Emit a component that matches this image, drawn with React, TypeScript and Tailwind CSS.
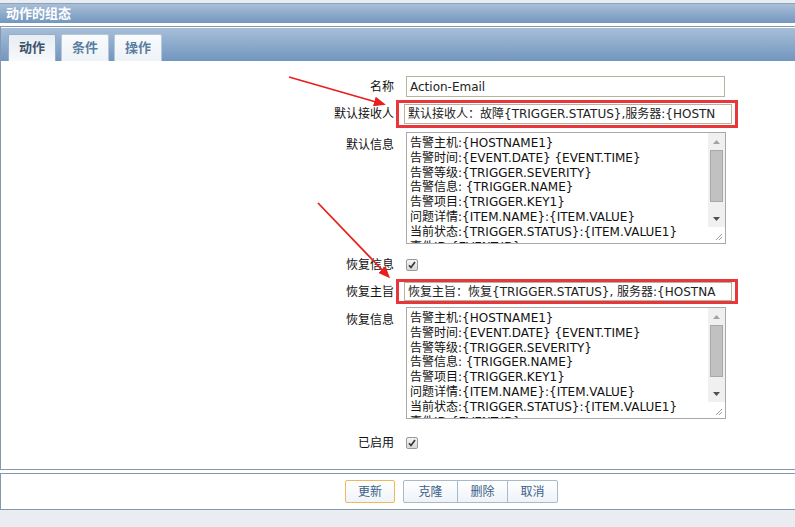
import React from "react";

const lines = [
  "告警主机:{HOSTNAME1}",
  "告警时间:{EVENT.DATE} {EVENT.TIME}",
  "告警等级:{TRIGGER.SEVERITY}",
  "告警信息: {TRIGGER.NAME}",
  "告警项目:{TRIGGER.KEY1}",
  "问题详情:{ITEM.NAME}:{ITEM.VALUE}",
  "当前状态:{TRIGGER.STATUS}:{ITEM.VALUE1}",
  "事件ID:{EVENT.ID}",
];

const font = { fontFamily: '"DejaVu Sans", "Noto Sans CJK SC", sans-serif' };

function FakeTextarea() {
  return (
    <div className="relative flex h-[112px] w-[320px] border border-[#a9a9a9] bg-white">
      <div className="flex-1 overflow-hidden pl-[3px] pt-[3px] text-[12px] leading-[14.8px] text-[#111]">
        {lines.map((l) => (
          <div key={l} className="whitespace-nowrap">{l}</div>
        ))}
      </div>
      <div className="flex w-[17px] flex-col bg-[#f0f0f0]">
        <div className="flex h-[17px] items-center justify-center">
          <svg width="7" height="4" viewBox="0 0 7 4"><path d="M0 4L3.5 0L7 4Z" fill="#a3a3a3" /></svg>
        </div>
        <div className="mx-[2px] h-[52px] border border-[#a8a8a8] bg-[#c1c1c1]" />
        <div className="flex-1" />
        <div className="flex h-[17px] items-center justify-center">
          <svg width="7" height="4" viewBox="0 0 7 4"><path d="M0 0L3.5 4L7 0Z" fill="#505050" /></svg>
        </div>
        <div className="relative h-[16px] bg-white">
          <svg className="absolute bottom-[2px] right-[2px]" width="9" height="9" viewBox="0 0 9 9">
            <path d="M8 2L2 8M8 5L5 8" stroke="#9a9a9a" strokeWidth="1" />
          </svg>
        </div>
      </div>
    </div>
  );
}

function Check() {
  return (
    <div className="flex h-[12px] w-[12px] items-center justify-center rounded-[2px] border border-[#9a9a9a] bg-gradient-to-b from-[#f4f4f4] to-[#d8d8d8]">
      <svg width="8" height="8" viewBox="0 0 8 8">
        <path d="M1 4.2L3 6.5L7 1" stroke="#333" strokeWidth="1.6" fill="none" />
      </svg>
    </div>
  );
}

function Label({ children }: { children: React.ReactNode }) {
  return <div className="w-[394px] shrink-0 pr-[1px] text-right text-[12px] text-[#111]">{children}</div>;
}

export default function App() {
  return (
    <div className="relative h-[527px] w-[795px] overflow-hidden bg-[#e9edf1]" style={font}>
      <div className="h-[3px]" />
      {/* header */}
      <div className="flex h-[20px] items-center border-t border-[#8aa2bd] bg-gradient-to-b from-[#a9bfd7] to-[#7397c0] pl-[6px] text-[13px] font-bold text-white">
        动作的组态
      </div>
      <div className="h-[3px] bg-white" />
      {/* main panel */}
      <div className="w-[800px] border border-r-0 border-[#8498ae] bg-white">
        <div className="flex h-[34px] items-end gap-[5px] border-t border-white bg-gradient-to-b from-[#a7bed8] to-[#7296bf] pl-[7px]">
          <div className="flex h-[27px] w-[48px] items-center justify-center rounded-t-[2px] border border-b-0 border-[#98aec5] bg-gradient-to-b from-[#e6edf4] to-[#f7f9fb] text-[13px] font-bold text-[#3f536b]">
            动作
          </div>
          <div className="flex h-[27px] w-[48px] items-center justify-center rounded-t-[2px] border border-b-0 border-[#b7c8da] bg-gradient-to-b from-[#f9fbfc] to-[#eef3f7] text-[13px] font-bold text-[#5b7da2]">
            条件
          </div>
          <div className="flex h-[27px] w-[48px] items-center justify-center rounded-t-[2px] border border-b-0 border-[#b7c8da] bg-gradient-to-b from-[#f9fbfc] to-[#eef3f7] text-[13px] font-bold text-[#5b7da2]">
            操作
          </div>
        </div>
        <div className="h-[408px] pt-[15px]">
          {/* name */}
          <div className="flex items-center">
            <Label>名称</Label>
            <div className="ml-[11px] flex h-[21px] w-[319px] items-center border border-[#b4b4a0] pl-[3px] text-[12px] text-[#222]">
              Action-Email
            </div>
          </div>
          {/* default subject */}
          <div className="mt-[3px] flex items-center">
            <Label>默认接收人</Label>
            <div className="ml-[1px] border-[3px] border-[#e8373a] py-[1px] pl-[5px] pr-[3px]">
              <div className="flex h-[20px] w-[328px] items-center overflow-hidden whitespace-nowrap border border-[#b4b4a0] pl-[3px] text-[12px] text-[#222]">
                默认接收人：故障{"{TRIGGER.STATUS}"},服务器:{"{HOSTN"}
              </div>
            </div>
          </div>
          {/* default message */}
          <div className="mt-[4px] flex items-start">
            <div className="pt-[4px]"><Label>默认信息</Label></div>
            <div className="ml-[11px]"><FakeTextarea /></div>
          </div>
          {/* recovery checkbox */}
          <div className="mt-[12px] flex items-center">
            <Label>恢复信息</Label>
            <div className="ml-[11px]"><Check /></div>
          </div>
          {/* recovery subject */}
          <div className="mt-[5px] flex items-center">
            <Label>恢复主旨</Label>
            <div className="ml-[1px] border-[3px] border-[#e8373a] pl-[5px] pr-[3px]">
              <div className="flex h-[19px] w-[328px] items-center overflow-hidden whitespace-nowrap border border-[#b4b4a0] pl-[3px] text-[12px] text-[#222]">
                恢复主旨：恢复{"{TRIGGER.STATUS}"}, 服务器:{"{HOSTNA"}
              </div>
            </div>
          </div>
          {/* recovery message */}
          <div className="mt-[3px] flex items-start">
            <div className="pt-[4px]"><Label>恢复信息</Label></div>
            <div className="ml-[11px]"><FakeTextarea /></div>
          </div>
          {/* enabled */}
          <div className="mt-[15px] flex items-center">
            <Label>已启用</Label>
            <div className="ml-[11px]"><Check /></div>
          </div>
        </div>
      </div>
      <div className="h-[3px] bg-white" />
      {/* footer */}
      <div className="flex h-[37px] w-[800px] items-center border border-r-0 border-[#8498ae] bg-white pl-[344px]">
        <div className="flex h-[23px] w-[50px] items-center justify-center rounded-[2px] border border-[#f0b85a] bg-gradient-to-b from-[#ffffff] to-[#f0f4f8] text-[12px] text-[#3d5f88]">
          更新
        </div>
        <div className="ml-[8px] flex h-[23px] rounded-[2px] border border-[#a7b9cd] bg-gradient-to-b from-[#ffffff] to-[#eef3f8] text-[12px] text-[#3d5f88]">
          <div className="flex w-[54px] items-center justify-center border-r border-[#a7b9cd]">克隆</div>
          <div className="flex w-[50px] items-center justify-center border-r border-[#a7b9cd]">删除</div>
          <div className="flex w-[49px] items-center justify-center">取消</div>
        </div>
      </div>
      {/* annotation arrows */}
      <svg className="pointer-events-none absolute left-0 top-0" width="795" height="527">
        <defs>
          <marker id="ah" markerWidth="12" markerHeight="10" refX="9" refY="5" orient="auto" markerUnits="userSpaceOnUse">
            <path d="M0 0L12 5L0 10Z" fill="#e8201c" />
          </marker>
        </defs>
        <line x1="289" y1="77" x2="383" y2="104" stroke="#e8201c" strokeWidth="1.8" markerEnd="url(#ah)" />
        <line x1="318" y1="203" x2="388" y2="276" stroke="#e8201c" strokeWidth="1.8" markerEnd="url(#ah)" />
      </svg>
    </div>
  );
}
